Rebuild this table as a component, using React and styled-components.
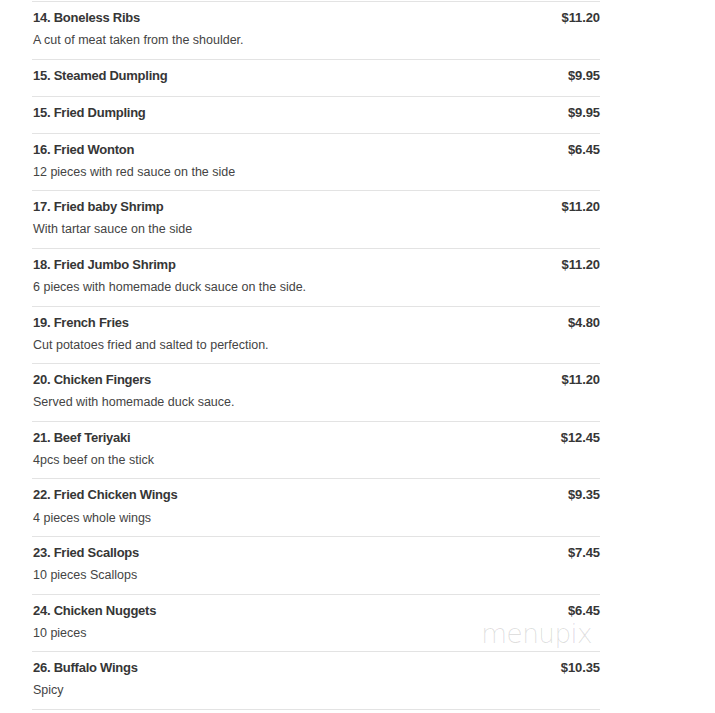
import React from "react";
import styled, { createGlobalStyle } from "styled-components";

const Global = createGlobalStyle`
  html, body { margin: 0; padding: 0; background: #fff; }
  body { font-family: "Liberation Sans", Arial, sans-serif; }
`;

const Page = styled.div`
  position: relative;
  width: 715px;
  height: 713px;
  overflow: hidden;
  padding-top: 1px;
  box-sizing: border-box;
`;

const List = styled.ul`
  list-style: none;
  margin: 0 0 0 32px;
  padding: 0;
  width: 568px;
`;

const Row = styled.li`
  border-top: 1px solid #e3e3e3;
  padding: 7px 0 ${(p) => (p.$desc ? "9.45px" : "11px")} 1px;
  &:last-child { border-bottom: 1px solid #e3e3e3; }
`;

const Head = styled.div`
  display: flex;
  justify-content: space-between;
  align-items: baseline;
  font-size: 13px;
  line-height: 18px;
  font-weight: bold;
  letter-spacing: -0.25px;
  color: #363636;
`;

const Price = styled.span`
  letter-spacing: -0.1px;
`;

const Desc = styled.div`
  margin-top: 5.2px;
  font-size: 12.5px;
  line-height: 17px;
  color: #444;
`;

const Watermark = styled.div`
  position: absolute;
  left: 481px;
  top: 619px;
  font-family: "DejaVu Sans", sans-serif;
  font-weight: 200;
  font-size: 27px;
  line-height: 30px;
  letter-spacing: -1px;
  color: rgba(0, 0, 0, 0.13);
  pointer-events: none;
`;

const items = [
  ["14. Boneless Ribs", "$11.20", "A cut of meat taken from the shoulder."],
  ["15. Steamed Dumpling", "$9.95"],
  ["15. Fried Dumpling", "$9.95"],
  ["16. Fried Wonton", "$6.45", "12 pieces with red sauce on the side"],
  ["17. Fried baby Shrimp", "$11.20", "With tartar sauce on the side"],
  ["18. Fried Jumbo Shrimp", "$11.20", "6 pieces with homemade duck sauce on the side."],
  ["19. French Fries", "$4.80", "Cut potatoes fried and salted to perfection."],
  ["20. Chicken Fingers", "$11.20", "Served with homemade duck sauce."],
  ["21. Beef Teriyaki", "$12.45", "4pcs beef on the stick"],
  ["22. Fried Chicken Wings", "$9.35", "4 pieces whole wings"],
  ["23. Fried Scallops", "$7.45", "10 pieces Scallops"],
  ["24. Chicken Nuggets", "$6.45", "10 pieces"],
  ["26. Buffalo Wings", "$10.35", "Spicy"],
];

export default function App() {
  return (
    <Page>
      <Global />
      <List>
        {items.map(([name, price, desc], i) => (
          <Row key={i} $desc={!!desc}>
            <Head>
              <span>{name}</span>
              <Price>{price}</Price>
            </Head>
            {desc && <Desc>{desc}</Desc>}
          </Row>
        ))}
      </List>
      <Watermark>menupix</Watermark>
    </Page>
  );
}
